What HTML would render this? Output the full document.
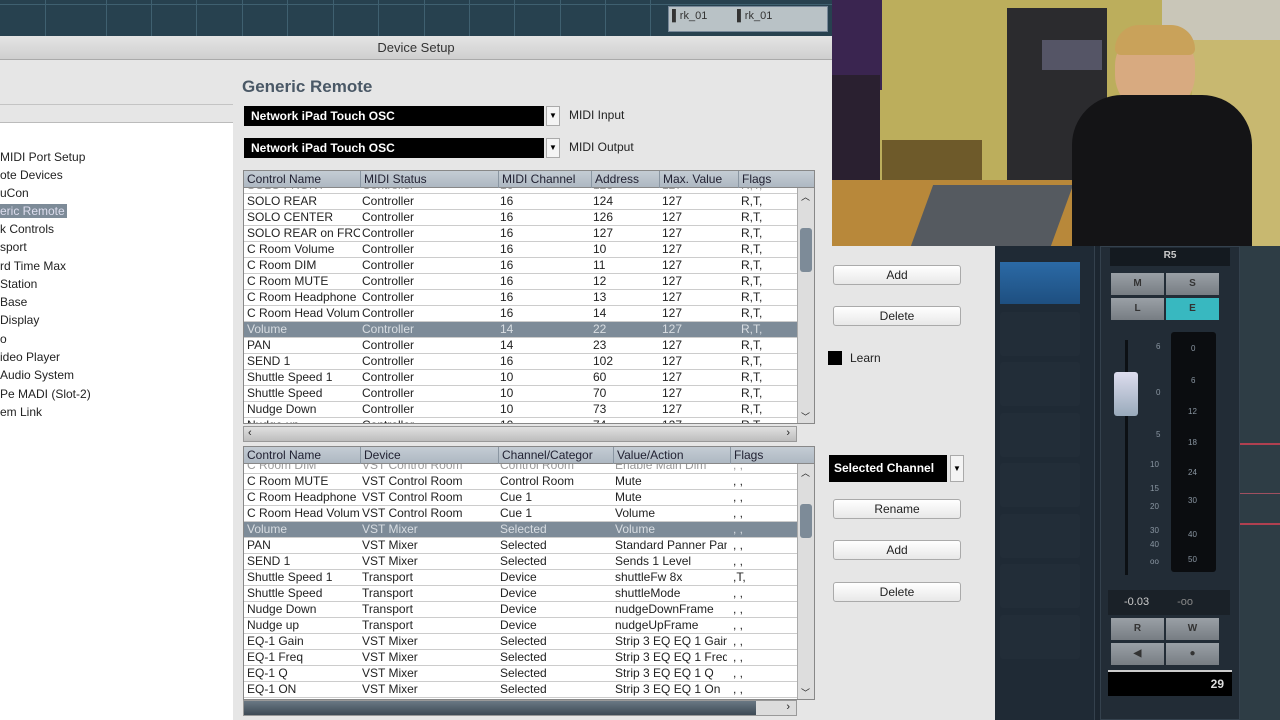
<!DOCTYPE html>
<html><head><meta charset="utf-8"><style>
*{margin:0;padding:0;box-sizing:border-box}
body{width:1280px;height:720px;overflow:hidden;position:relative;background:#1c2530;font-family:"Liberation Sans",sans-serif;font-size:12px;color:#222}
.a{position:absolute}
.top{left:0;top:0;width:832px;height:36px;background:#27414f}
.vl{position:absolute;top:0;width:1px;height:36px;background:#3f6070}
.title{left:0;top:36px;width:832px;height:24px;background:linear-gradient(#e4e4e4,#cfcfcf);border-bottom:1px solid #aaa;text-align:center;line-height:24px;font-size:13px;color:#333}
.body{left:0;top:60px;width:832px;height:660px;background:#e6e6e6}
.list{left:0;top:122px;width:233px;height:598px;background:#fff;border-top:1px solid #bbb}
.list div{position:absolute;left:0;font-size:12px;color:#222;white-space:nowrap}
.h1{left:242px;top:77px;font-size:17px;font-weight:bold;color:#4a5866}
.dd{height:20px;background:#000;color:#fff;font-size:12px;line-height:20px;padding-left:7px;font-weight:bold}
.ddb{width:14px;height:20px;background:#f4f4f4;border:1px solid #aaa;font-size:8px;text-align:center;line-height:18px;color:#000}
.tbl{background:#fff;border:1px solid #888;overflow:hidden}
.hdr{position:absolute;left:0;top:0;height:17px;background:linear-gradient(#c4ccd4,#aeb8c2);width:100%;border-bottom:1px solid #888}
.hdr span,.row span{position:absolute;white-space:nowrap;overflow:hidden;line-height:15px}
.hdr span{border-left:1px solid #8a96a2;padding-left:3px;height:17px;line-height:17px;color:#223}
.row{position:absolute;left:0;height:16px;width:553px;border-bottom:1px solid #ccc;background:#fff}
.row.sel{background:#7d8b98;color:#d8dde2}
.t1 .row span:nth-child(1){left:3px;width:113px}.t1 .row span:nth-child(2){left:118px}.t1 .row span:nth-child(3){left:256px}.t1 .row span:nth-child(4){left:349px}.t1 .row span:nth-child(5){left:418px}.t1 .row span:nth-child(6){left:497px}
.t2 .row span:nth-child(1){left:3px;width:113px}.t2 .row span:nth-child(2){left:118px}.t2 .row span:nth-child(3){left:256px}.t2 .row span:nth-child(4){left:371px;width:112px}.t2 .row span:nth-child(5){left:489px}
.vs{position:absolute;right:0;width:17px;background:#ddd;border-left:1px solid #aaa}
.hs{height:16px;background:linear-gradient(#e0e0e0,#bdbdbd);border:1px solid #999}
.btn{width:128px;height:20px;border:1px solid #aaa;border-radius:3px;background:linear-gradient(#fff,#e8e8e8);text-align:center;line-height:18px;font-size:12px;color:#222}
.slot{position:absolute;left:1000px;width:80px;height:44px;background:#222d38;border-radius:3px}
.mb{position:absolute;width:53px;height:22px;background:linear-gradient(#9aa0a6,#777d83);text-align:center;line-height:22px;font-size:10px;color:#333;font-weight:bold}
.sc{position:absolute;font-size:8px;color:#8a96a2}
</style></head><body>
<div class="a top"></div>
<div class="a" style="left:0;top:0;width:832px;height:36px">
<div class="vl" style="left:45px"></div><div class="vl" style="left:106px"></div><div class="vl" style="left:151px"></div><div class="vl" style="left:196px"></div><div class="vl" style="left:242px"></div><div class="vl" style="left:287px"></div><div class="vl" style="left:333px"></div><div class="vl" style="left:378px"></div><div class="vl" style="left:424px"></div><div class="vl" style="left:469px"></div><div class="vl" style="left:514px"></div><div class="vl" style="left:560px"></div><div class="vl" style="left:605px"></div><div class="vl" style="left:650px"></div>
<div class="a" style="left:0;top:4px;width:832px;height:1px;background:#3f6070"></div>
<div class="a" style="left:668px;top:6px;width:160px;height:26px;background:#b9c2c6;border:1px solid #789"></div>
<div class="a" style="left:672px;top:10px;width:60px;height:16px;font-size:11px;color:#333">▌rk_01</div>
<div class="a" style="left:737px;top:10px;width:60px;height:16px;font-size:11px;color:#333">▌rk_01</div>
</div>
<div class="a title">Device Setup</div>
<div class="a body"></div>
<div class="a" style="left:820px;top:246px;width:175px;height:474px;background:#e6e6e6"></div>
<div class="a" style="left:0;top:104px;width:233px;height:1px;background:#c4c4c4"></div>
<div class="a list">
<div style="top:27px">MIDI Port Setup</div><div style="top:45px">ote Devices</div><div style="top:63px">uCon</div>
<div style="top:81px;background:#7d8b98;color:#dde;padding-right:2px">eric Remote</div>
<div style="top:99px">k Controls</div><div style="top:117px">sport</div><div style="top:136px">rd Time Max</div><div style="top:154px">Station</div><div style="top:172px"> Base</div><div style="top:190px"> Display</div><div style="top:209px">o</div><div style="top:227px">ideo Player</div><div style="top:245px">Audio System</div><div style="top:264px">Pe MADI (Slot-2)</div><div style="top:282px">em Link</div>
</div>
<div class="a h1">Generic Remote</div>
<div class="a dd" style="left:244px;top:106px;width:300px">Network iPad Touch OSC</div>
<div class="a ddb" style="left:546px;top:106px">▼</div>
<div class="a" style="left:569px;top:108px;font-size:12px">MIDI Input</div>
<div class="a dd" style="left:244px;top:138px;width:300px">Network iPad Touch OSC</div>
<div class="a ddb" style="left:546px;top:138px">▼</div>
<div class="a" style="left:569px;top:140px;font-size:12px">MIDI Output</div>

<div class="a tbl t1" style="left:243px;top:170px;width:572px;height:254px">
<div class="row" style="top:7px;color:#999"><span>SOLO FRONT</span><span>Controller</span><span>16</span><span>123</span><span>127</span><span>R,T,</span></div>
<div class="row" style="top:23px"><span>SOLO REAR</span><span>Controller</span><span>16</span><span>124</span><span>127</span><span>R,T,</span></div>
<div class="row" style="top:39px"><span>SOLO CENTER</span><span>Controller</span><span>16</span><span>126</span><span>127</span><span>R,T,</span></div>
<div class="row" style="top:55px"><span>SOLO REAR on FRONT</span><span>Controller</span><span>16</span><span>127</span><span>127</span><span>R,T,</span></div>
<div class="row" style="top:71px"><span>C Room Volume</span><span>Controller</span><span>16</span><span>10</span><span>127</span><span>R,T,</span></div>
<div class="row" style="top:87px"><span>C Room DIM</span><span>Controller</span><span>16</span><span>11</span><span>127</span><span>R,T,</span></div>
<div class="row" style="top:103px"><span>C Room MUTE</span><span>Controller</span><span>16</span><span>12</span><span>127</span><span>R,T,</span></div>
<div class="row" style="top:119px"><span>C Room Headphone</span><span>Controller</span><span>16</span><span>13</span><span>127</span><span>R,T,</span></div>
<div class="row" style="top:135px"><span>C Room Head Volume</span><span>Controller</span><span>16</span><span>14</span><span>127</span><span>R,T,</span></div>
<div class="row sel" style="top:151px"><span>Volume</span><span>Controller</span><span>14</span><span>22</span><span>127</span><span>R,T,</span></div>
<div class="row" style="top:167px"><span>PAN</span><span>Controller</span><span>14</span><span>23</span><span>127</span><span>R,T,</span></div>
<div class="row" style="top:183px"><span>SEND 1</span><span>Controller</span><span>16</span><span>102</span><span>127</span><span>R,T,</span></div>
<div class="row" style="top:199px"><span>Shuttle Speed 1</span><span>Controller</span><span>10</span><span>60</span><span>127</span><span>R,T,</span></div>
<div class="row" style="top:215px"><span>Shuttle Speed</span><span>Controller</span><span>10</span><span>70</span><span>127</span><span>R,T,</span></div>
<div class="row" style="top:231px"><span>Nudge Down</span><span>Controller</span><span>10</span><span>73</span><span>127</span><span>R,T,</span></div>
<div class="row" style="top:247px"><span>Nudge up</span><span>Controller</span><span>10</span><span>74</span><span>127</span><span>R,T,</span></div>
<div class="hdr"><span style="left:0;width:116px;border-left:0">Control Name</span><span style="left:116px;width:138px">MIDI Status</span><span style="left:254px;width:93px">MIDI Channel</span><span style="left:347px;width:68px">Address</span><span style="left:415px;width:79px">Max. Value</span><span style="left:494px;width:59px">Flags</span></div>
<div class="vs" style="top:17px;height:237px"><div style="position:absolute;top:40px;left:2px;width:12px;height:44px;background:#7d8b98;border-radius:3px"></div><div style="position:absolute;top:2px;left:3px;font-size:9px">︿</div><div style="position:absolute;bottom:2px;left:3px;font-size:9px">﹀</div></div>
</div>
<div class="a hs" style="left:243px;top:426px;width:554px"><span style="position:absolute;left:4px;top:0;font-size:11px">‹</span><span style="position:absolute;right:6px;top:0;font-size:11px">›</span></div>

<div class="a tbl t2" style="left:243px;top:446px;width:572px;height:254px">
<div class="row" style="top:11px;color:#999"><span>C Room DIM</span><span>VST Control Room</span><span>Control Room</span><span>Enable Main Dim</span><span>, ,</span></div>
<div class="row" style="top:27px"><span>C Room MUTE</span><span>VST Control Room</span><span>Control Room</span><span>Mute</span><span>, ,</span></div>
<div class="row" style="top:43px"><span>C Room Headphone</span><span>VST Control Room</span><span>Cue 1</span><span>Mute</span><span>, ,</span></div>
<div class="row" style="top:59px"><span>C Room Head Volume</span><span>VST Control Room</span><span>Cue 1</span><span>Volume</span><span>, ,</span></div>
<div class="row sel" style="top:75px"><span>Volume</span><span>VST Mixer</span><span>Selected</span><span>Volume</span><span>, ,</span></div>
<div class="row" style="top:91px"><span>PAN</span><span>VST Mixer</span><span>Selected</span><span>Standard Panner Pan</span><span>, ,</span></div>
<div class="row" style="top:107px"><span>SEND 1</span><span>VST Mixer</span><span>Selected</span><span>Sends 1 Level</span><span>, ,</span></div>
<div class="row" style="top:123px"><span>Shuttle Speed 1</span><span>Transport</span><span>Device</span><span>shuttleFw 8x</span><span>,T,</span></div>
<div class="row" style="top:139px"><span>Shuttle Speed</span><span>Transport</span><span>Device</span><span>shuttleMode</span><span>, ,</span></div>
<div class="row" style="top:155px"><span>Nudge Down</span><span>Transport</span><span>Device</span><span>nudgeDownFrame</span><span>, ,</span></div>
<div class="row" style="top:171px"><span>Nudge up</span><span>Transport</span><span>Device</span><span>nudgeUpFrame</span><span>, ,</span></div>
<div class="row" style="top:187px"><span>EQ-1 Gain</span><span>VST Mixer</span><span>Selected</span><span>Strip 3 EQ EQ 1 Gain</span><span>, ,</span></div>
<div class="row" style="top:203px"><span>EQ-1 Freq</span><span>VST Mixer</span><span>Selected</span><span>Strip 3 EQ EQ 1 Freq</span><span>, ,</span></div>
<div class="row" style="top:219px"><span>EQ-1 Q</span><span>VST Mixer</span><span>Selected</span><span>Strip 3 EQ EQ 1 Q</span><span>, ,</span></div>
<div class="row" style="top:235px"><span>EQ-1 ON</span><span>VST Mixer</span><span>Selected</span><span>Strip 3 EQ EQ 1 On</span><span>, ,</span></div>
<div class="hdr"><span style="left:0;width:116px;border-left:0">Control Name</span><span style="left:116px;width:138px">Device</span><span style="left:254px;width:115px">Channel/Categor</span><span style="left:369px;width:117px">Value/Action</span><span style="left:486px;width:67px">Flags</span></div>
<div class="vs" style="top:17px;height:237px"><div style="position:absolute;top:40px;left:2px;width:12px;height:34px;background:#7d8b98;border-radius:3px"></div><div style="position:absolute;top:2px;left:3px;font-size:9px">︿</div><div style="position:absolute;bottom:2px;left:3px;font-size:9px">﹀</div></div>
</div>
<div class="a hs" style="left:243px;top:700px;width:554px;background:#dcdcdc"><div style="position:absolute;left:0;top:0;width:512px;height:14px;background:linear-gradient(#6a7884,#3d4a55)"></div><span style="position:absolute;right:6px;top:0;font-size:11px">›</span></div>

<div class="a btn" style="left:833px;top:265px">Add</div>
<div class="a btn" style="left:833px;top:306px">Delete</div>
<div class="a" style="left:828px;top:351px;width:14px;height:14px;background:#000"></div>
<div class="a" style="left:850px;top:351px;color:#222">Learn</div>
<div class="a dd" style="left:829px;top:455px;width:118px;height:27px;line-height:27px;padding-left:5px">Selected Channel</div>
<div class="a ddb" style="left:950px;top:455px;height:27px;line-height:25px">▼</div>
<div class="a btn" style="left:833px;top:499px">Rename</div>
<div class="a btn" style="left:833px;top:540px">Add</div>
<div class="a btn" style="left:833px;top:582px">Delete</div>

<div class="a" style="left:832px;top:0;width:448px;height:246px;background:#bcae5c;overflow:hidden">
<div class="a" style="left:0;top:0;width:50px;height:90px;background:#3a2550"></div>
<div class="a" style="left:330px;top:0;width:118px;height:45px;background:#c9c6b8"></div>
<div class="a" style="left:360px;top:40px;width:88px;height:206px;background:#c8b870"></div>
<div class="a" style="left:175px;top:8px;width:100px;height:180px;background:#2b2b2e"></div>
<div class="a" style="left:210px;top:40px;width:60px;height:30px;background:#556"></div>
<div class="a" style="left:0;top:75px;width:48px;height:150px;background:#2a2030"></div>
<div class="a" style="left:50px;top:140px;width:100px;height:40px;background:#6e5a2a"></div>
<div class="a" style="left:0;top:180px;width:290px;height:66px;background:#b8883a"></div>
<div class="a" style="left:90px;top:185px;width:140px;height:61px;background:#555a60;transform:skewX(-20deg)"></div>
<div class="a" style="left:283px;top:30px;width:80px;height:85px;background:#d8aa80;border-radius:40px 40px 45px 45px"></div>
<div class="a" style="left:283px;top:25px;width:80px;height:30px;background:#c9a25a;border-radius:40px 40px 10px 10px"></div>
<div class="a" style="left:240px;top:95px;width:180px;height:151px;background:#141416;border-radius:50px 50px 0 0"></div>
</div>

<div class="a" style="left:995px;top:246px;width:285px;height:474px;background:#1c2630"></div>
<div class="a" style="left:995px;top:246px;width:100px;height:474px;background:#1f2a35;border-right:1px solid #34414d"></div>
<div class="a" style="left:1000px;top:262px;width:80px;height:42px;background:linear-gradient(#2b6aa6,#1e4f80)"></div>
<div class="slot" style="top:312px"></div><div class="slot" style="top:362px"></div><div class="slot" style="top:413px"></div><div class="slot" style="top:463px"></div><div class="slot" style="top:514px"></div><div class="slot" style="top:564px"></div><div class="slot" style="top:615px"></div>
<div class="a" style="left:1100px;top:246px;width:140px;height:474px;background:#222c36;border:1px solid #34414d"></div>
<div class="a" style="left:1110px;top:248px;width:120px;height:18px;background:#141a20;color:#ccc;font-size:10px;text-align:center;line-height:16px;font-weight:bold">R5</div>
<div class="mb" style="left:1111px;top:273px">M</div><div class="mb" style="left:1166px;top:273px">S</div>
<div class="mb" style="left:1111px;top:298px">L</div><div class="mb" style="left:1166px;top:298px;background:#38b8c0">E</div>
<div class="a" style="left:1125px;top:340px;width:3px;height:235px;background:#0c1014"></div>
<div class="a" style="left:1114px;top:372px;width:24px;height:44px;background:linear-gradient(#dde,#9ab);border-radius:3px"></div>
<div class="a" style="left:1171px;top:332px;width:45px;height:240px;background:#0b0d10;border-radius:3px"></div>
<div class="sc" style="left:1156px;top:342px">6</div><div class="sc" style="left:1156px;top:388px">0</div><div class="sc" style="left:1156px;top:430px">5</div><div class="sc" style="left:1150px;top:460px">10</div><div class="sc" style="left:1150px;top:484px">15</div><div class="sc" style="left:1150px;top:502px">20</div><div class="sc" style="left:1150px;top:526px">30</div><div class="sc" style="left:1150px;top:540px">40</div><div class="sc" style="left:1150px;top:557px">oo</div>
<div class="sc" style="left:1191px;top:344px">0</div><div class="sc" style="left:1191px;top:376px">6</div><div class="sc" style="left:1188px;top:407px">12</div><div class="sc" style="left:1188px;top:438px">18</div><div class="sc" style="left:1188px;top:468px">24</div><div class="sc" style="left:1188px;top:496px">30</div><div class="sc" style="left:1188px;top:530px">40</div><div class="sc" style="left:1188px;top:555px">50</div>
<div class="a" style="left:1108px;top:590px;width:122px;height:25px;background:#1a2128;color:#ccc;font-size:11px;line-height:25px"><span style="margin-left:16px">-0.03</span><span style="margin-left:28px;color:#888">-oo</span></div>
<div class="mb" style="left:1111px;top:618px">R</div><div class="mb" style="left:1166px;top:618px">W</div>
<div class="mb" style="left:1111px;top:643px">◀</div><div class="mb" style="left:1166px;top:643px">●</div>
<div class="a" style="left:1108px;top:670px;width:124px;height:26px;background:#000;border-top:2px solid #ccc;color:#ddd;font-weight:bold;text-align:right;padding-right:8px;line-height:24px">29</div>
<div class="a" style="left:1240px;top:246px;width:40px;height:474px;background:#2e3d45"></div>
<div class="a" style="left:1240px;top:443px;width:40px;height:2px;background:#b04050"></div>
<div class="a" style="left:1240px;top:493px;width:40px;height:1px;background:#a05060"></div>
<div class="a" style="left:1240px;top:523px;width:40px;height:2px;background:#b04050"></div>
</body></html>
